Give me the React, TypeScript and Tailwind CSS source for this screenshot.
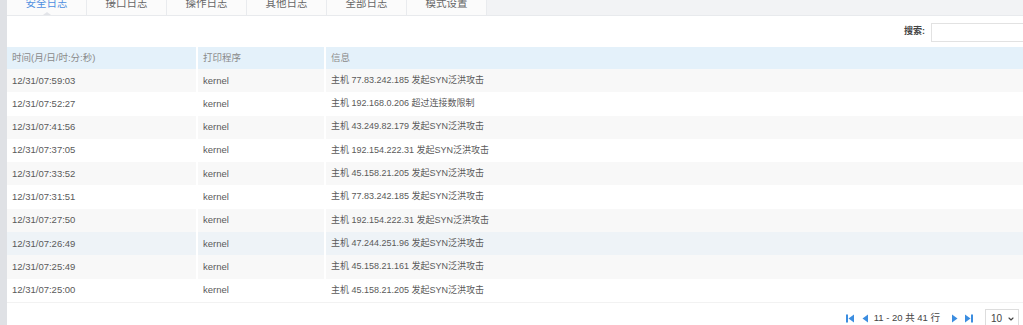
import { ChevronDown } from "lucide-react";

const tabs = ["安全日志", "接口日志", "操作日志", "其他日志", "全部日志", "模式设置"];

const rows = [
  ["12/31/07:59:03", "kernel", "主机 77.83.242.185 发起SYN泛洪攻击"],
  ["12/31/07:52:27", "kernel", "主机 192.168.0.206 超过连接数限制"],
  ["12/31/07:41:56", "kernel", "主机 43.249.82.179 发起SYN泛洪攻击"],
  ["12/31/07:37:05", "kernel", "主机 192.154.222.31 发起SYN泛洪攻击"],
  ["12/31/07:33:52", "kernel", "主机 45.158.21.205 发起SYN泛洪攻击"],
  ["12/31/07:31:51", "kernel", "主机 77.83.242.185 发起SYN泛洪攻击"],
  ["12/31/07:27:50", "kernel", "主机 192.154.222.31 发起SYN泛洪攻击"],
  ["12/31/07:26:49", "kernel", "主机 47.244.251.96 发起SYN泛洪攻击"],
  ["12/31/07:25:49", "kernel", "主机 45.158.21.161 发起SYN泛洪攻击"],
  ["12/31/07:25:00", "kernel", "主机 45.158.21.205 发起SYN泛洪攻击"],
];

const PagerIcon = ({ dir, edge }: { dir: "l" | "r"; edge?: boolean }) => (
  <svg width="8" height="9" viewBox="0 0 8 9" className="shrink-0">
    {dir === "l" ? (
      <>
        {edge && <rect x="0" y="0.5" width="2" height="8" fill="#3b8de0" />}
        <polygon points={edge ? "8,0.5 2.5,4.5 8,8.5" : "7,0.5 1.5,4.5 7,8.5"} fill="#3b8de0" />
      </>
    ) : (
      <>
        <polygon points={edge ? "0,0.5 5.5,4.5 0,8.5" : "1,0.5 6.5,4.5 1,8.5"} fill="#3b8de0" />
        {edge && <rect x="6" y="0.5" width="2" height="8" fill="#3b8de0" />}
      </>
    )}
  </svg>
);

const App = () => {
  return (
    <div
      className="flex w-[1023px] h-[325px] overflow-hidden bg-white text-[9.5px] text-[#5a5a5a]"
      style={{ fontFamily: '"Liberation Sans", "Noto Sans CJK SC", sans-serif' }}
    >
      {/* left strip */}
      <div className="w-[7px] shrink-0 bg-[#dfe1e5]" />

      <div className="flex-1 flex flex-col min-w-0">
        {/* tabs */}
        <div className="h-[16px] shrink-0 overflow-hidden bg-[#f2f3f5] border-b border-[#e8eaed] flex">
          {tabs.map((t, i) => (
            <div
              key={t}
              className={`relative w-[80px] h-[15px] overflow-hidden border-r border-[#e9ebee] bg-[#fbfbfb] flex justify-center ${
                i === 0 ? "text-[#4f8fe0]" : "text-[#666]"
              }`}
            >
              <span className="mt-[-3px] text-[10.5px] leading-[13px]">{t}</span>
              {i === 0 && (
                <span className="absolute bottom-0 left-[36px] w-0 h-0 border-l-[4px] border-r-[4px] border-b-[3px] border-l-transparent border-r-transparent border-b-[#e2e4e8]" />
              )}
            </div>
          ))}
        </div>

        {/* search */}
        <div className="h-[31px] shrink-0 flex items-center justify-end pt-[1px]">
          <span className="text-[9px] font-bold text-[#444] mr-[6px]">搜索:</span>
          <div className="w-[92px] h-[19px] border border-[#e2e2e2] border-r-0 bg-white" />
        </div>

        {/* table */}
        <div className="flex flex-col">
          <div className="flex h-[22px] bg-[#e4f1fa] text-[#8a8a8a] text-[9.5px]">
            <div className="w-[191px] pl-[5px] flex items-center border-r-[2px] border-white">时间(月/日/时:分:秒)</div>
            <div className="w-[128px] pl-[5px] flex items-center border-r-[2px] border-white">打印程序</div>
            <div className="flex-1 pl-[5px] flex items-center">信息</div>
          </div>
          {rows.map((r, i) => (
            <div
              key={i}
              className={`flex h-[23.3px] ${
                i === 7 ? "bg-[#eef3f7]" : i % 2 === 0 ? "bg-[#f8f8f8]" : "bg-white"
              }`}
            >
              <div className="w-[191px] pl-[5px] flex items-center border-r-[2px] border-white">{r[0]}</div>
              <div className="w-[128px] pl-[5px] flex items-center border-r-[2px] border-white">{r[1]}</div>
              <div className="flex-1 pl-[5px] flex items-center text-[9px]">{r[2]}</div>
            </div>
          ))}
          <div className="h-[1px] bg-[#f2f2f2]" />
        </div>

        {/* pager */}
        <div className="flex-1 flex items-end justify-end">
          <div className="flex items-center h-[18px] mb-[-2px]">
            <PagerIcon dir="l" edge />
            <span className="w-[7px]" />
            <PagerIcon dir="l" />
            <span className="ml-[5px] mr-[11px] text-[9.5px] text-[#444] whitespace-nowrap">11 - 20 共 41 行</span>
            <PagerIcon dir="r" />
            <span className="w-[6px]" />
            <PagerIcon dir="r" edge />
            <div className="ml-[12px] mr-[4px] shrink-0 w-[34px] h-[18px] border border-[#ddd] border-b-0 flex items-center justify-between pl-[5px] pr-[3px] text-[10px] text-[#444]">
              <span>10</span>
              <ChevronDown size={8} strokeWidth={3.5} className="shrink-0" />
            </div>
          </div>
        </div>
      </div>
    </div>
  );
};

export default App;
